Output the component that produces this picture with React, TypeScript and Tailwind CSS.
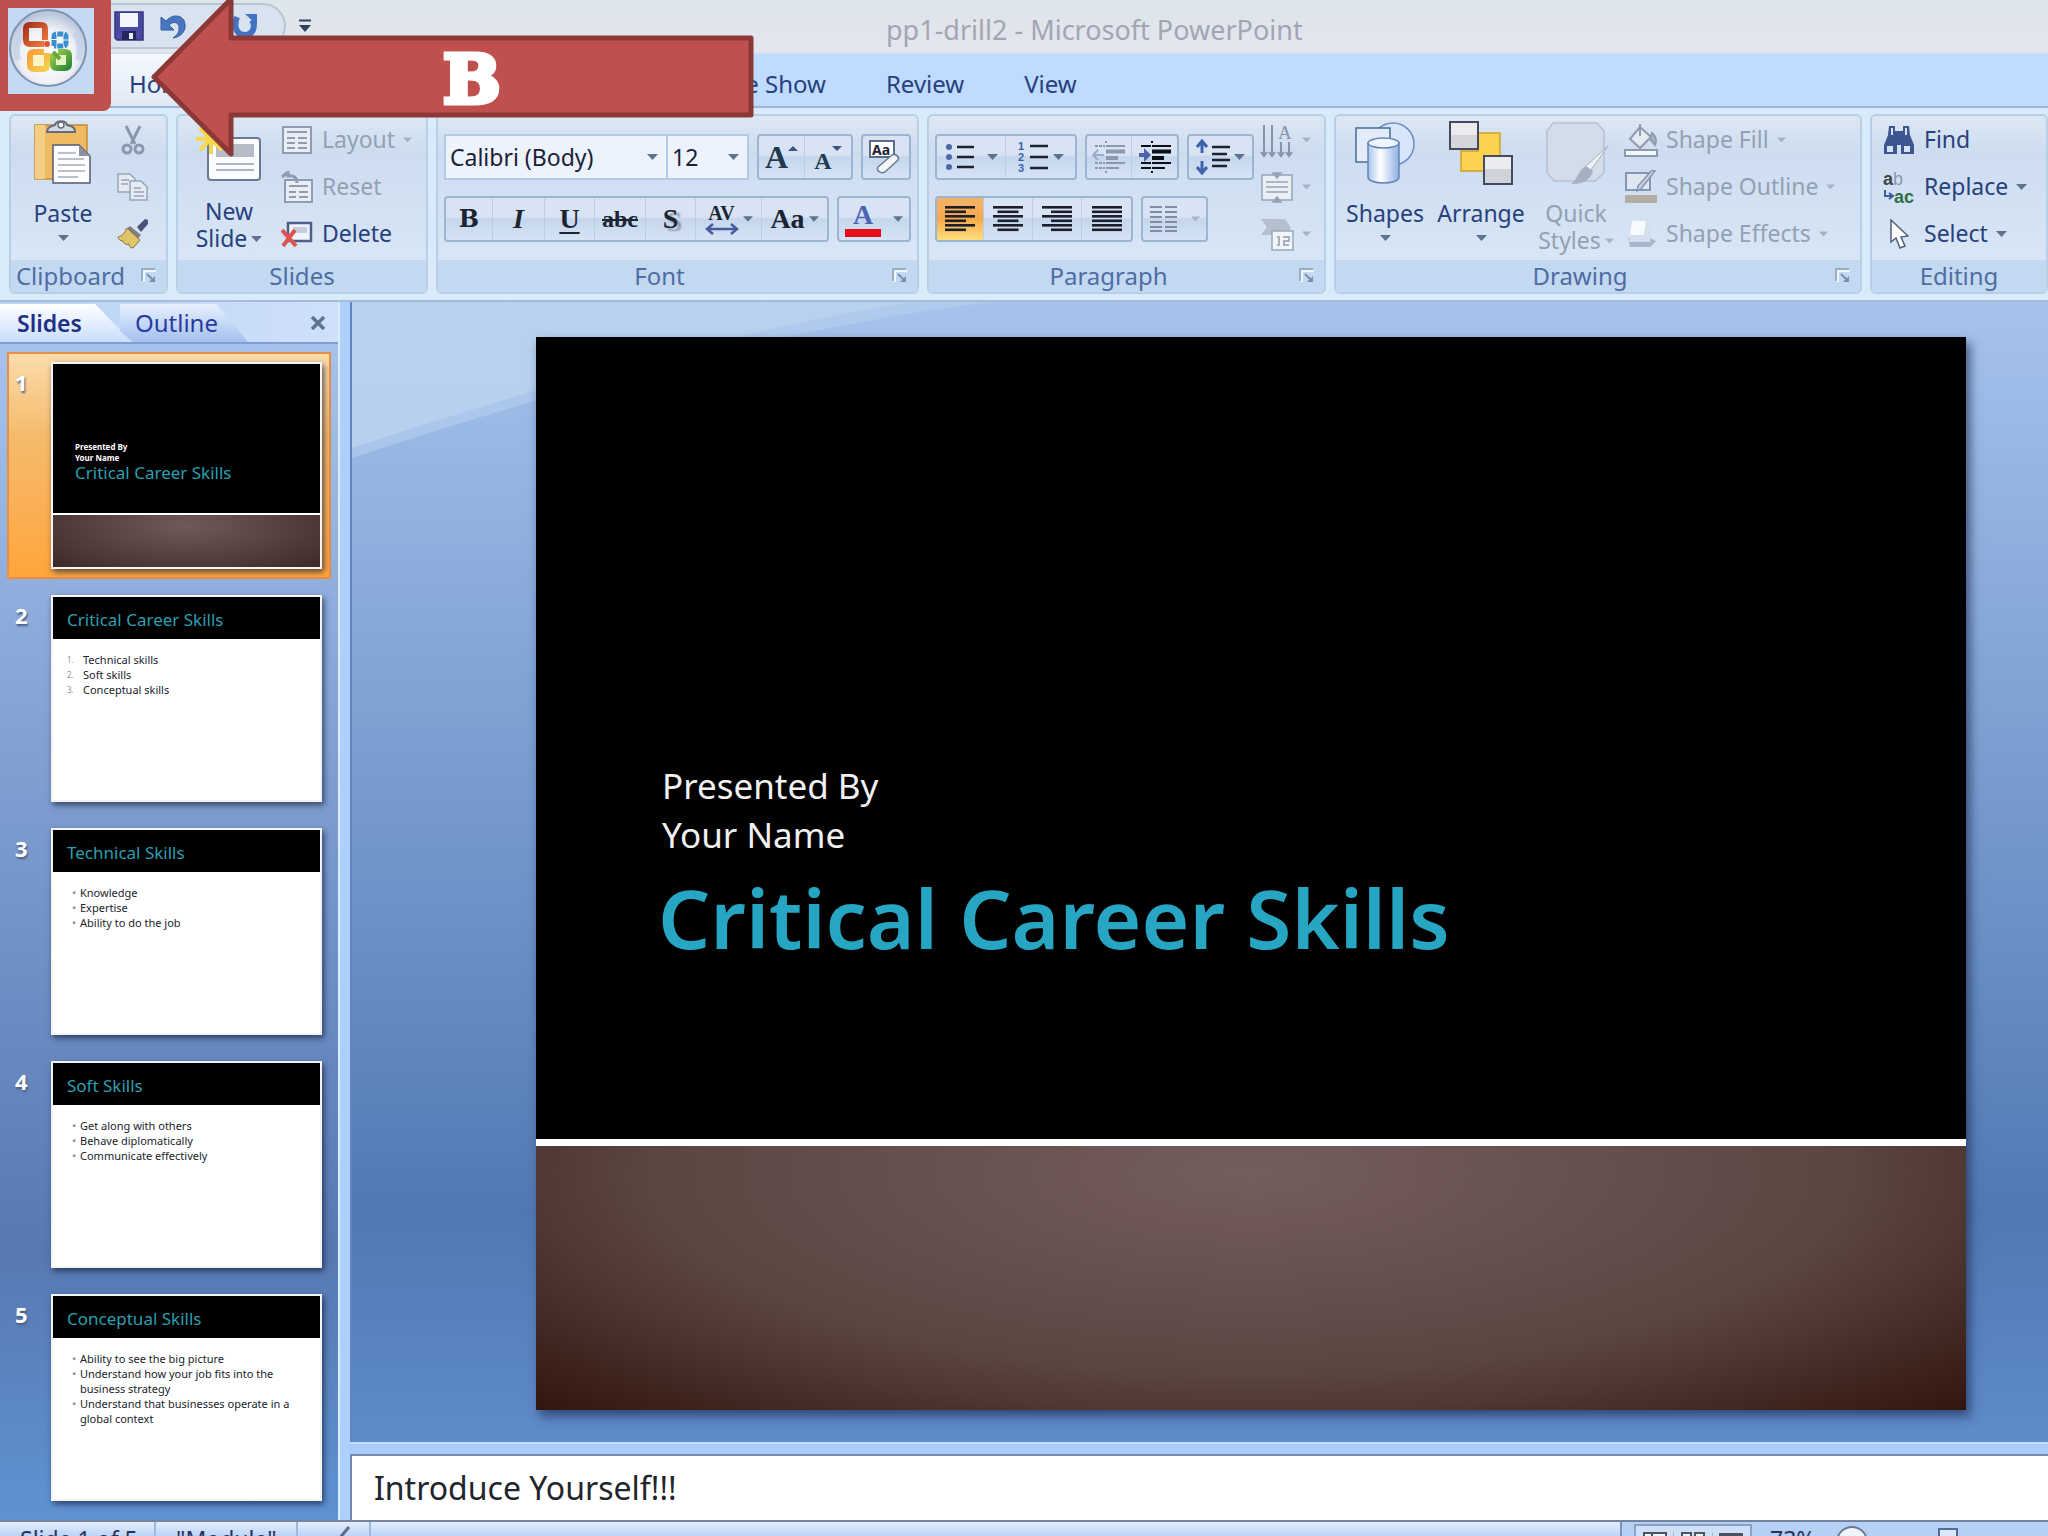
import type { ReactNode } from 'react';

const slides = [
  { title: 'Critical Career Skills', numbered: true, points: ['Technical skills', 'Soft skills', 'Conceptual skills'] },
  { title: 'Technical Skills', points: ['Knowledge', 'Expertise', 'Ability to do the job'] },
  { title: 'Soft Skills', points: ['Get along with others', 'Behave diplomatically', 'Communicate effectively'] },
  {
    title: 'Conceptual Skills',
    points: [
      'Ability to see the big picture',
      'Understand how your job fits into the business strategy',
      'Understand that businesses operate in a global context'
    ]
  }
];

function Caret({ className = 'text-[#5f7390]' }: { className?: string }) {
  return (
    <svg width="11" height="6" viewBox="0 0 11 6" className={`shrink-0 ${className}`} aria-hidden="true">
      <path d="M0 0h11L5.500 6z" fill="currentColor" />
    </svg>
  );
}

function Launcher({ label }: { label: string }) {
  return (
    <button aria-label={label} className="mr-2">
      <svg width="18" height="18" viewBox="0 0 18 18" fill="none">
        <path d="M2 14V2h13" stroke="#8b9fbe" strokeWidth="1.500" />
        <path d="M4 15V4h12" stroke="#fff" strokeWidth="1.500" />
        <path d="M7 7l6 6" stroke="#7a8fb0" strokeWidth="2" />
        <path d="M15 9v6H9z" fill="#7a8fb0" />
      </svg>
    </button>
  );
}

function Group({ name, width, launcher, children }: { name: string; width: string; launcher?: boolean; children: ReactNode }) {
  return (
    <section
      aria-label={name}
      className={`flex shrink-0 flex-col overflow-hidden rounded-md border-2 border-[#b9cfe6] bg-linear-to-b from-[#dde8f4] via-[#cddcef] via-20% to-[#dbe9f9] ${width}`}
    >
      <div className="flex h-[144px] text-[#27417c]">{children}</div>
      <div className="flex h-8 items-center bg-[#c2d9f1] text-2xl text-[#4f6da3]">
        <span className={`flex-1 text-center leading-8 ${launcher ? 'pr-2.5' : ''}`}>{name}</span>
        {launcher && <Launcher label={`${name} options`} />}
      </div>
    </section>
  );
}

function ButtonBox({ children, className = '' }: { children: ReactNode; className?: string }) {
  return (
    <div className={`flex h-[46px] items-stretch overflow-hidden rounded-sm border-2 border-[#9db4d3] bg-linear-to-b from-[#d8e4f3] from-45% via-[#c5d6ec] via-50% to-[#d5e3f5] ${className}`}>
      {children}
    </div>
  );
}

function Tool({ label, width, className = '', children }: { label: string; width: string; className?: string; children: ReactNode }) {
  return (
    <button aria-label={label} className={`flex items-center justify-center gap-1 border-r border-[#bccde4] last:border-r-0 ${width} ${className}`}>
      {children}
    </button>
  );
}

function SmallRow({ icon, label, caret, muted }: { icon: ReactNode; label: string; caret?: boolean; muted?: boolean }) {
  return (
    <button className={`flex h-[47px] items-center gap-2 whitespace-nowrap ${muted ? 'text-[#94a0b3]' : ''}`}>
      <span className="flex w-[34px] justify-center">{icon}</span>
      {label}
      {caret && <Caret className={muted ? 'w-[9px] text-[#a5b3c8]' : 'text-[#5f7390]'} />}
    </button>
  );
}

function OfficeLogo() {
  return (
    <svg width="86" height="86" viewBox="0 0 86 86" aria-hidden="true">
      <defs>
        <radialGradient id="orb" cx="50%" cy="60%" r="55%">
          <stop offset="0" stopColor="#ffffff" />
          <stop offset="0.65" stopColor="#f0f1f5" />
          <stop offset="1" stopColor="#b9c7dd" />
        </radialGradient>
        <linearGradient id="logoRed" x1="0" y1="0" x2="1" y2="1">
          <stop offset="0" stopColor="#a8321a" />
          <stop offset="1" stopColor="#ee7a3c" />
        </linearGradient>
        <linearGradient id="logoYellow" x1="0" y1="0" x2="1" y2="1">
          <stop offset="0" stopColor="#f7a13a" />
          <stop offset="1" stopColor="#f8cf4e" />
        </linearGradient>
        <linearGradient id="logoGreen" x1="0" y1="0" x2="1" y2="1">
          <stop offset="0" stopColor="#9ecb4a" />
          <stop offset="1" stopColor="#2c8a35" />
        </linearGradient>
      </defs>
      <path d="M0 0h86v86H0z" fill="#c6d9f3" />
      <circle cx="40" cy="40" r="38" fill="url(#orb)" stroke="#7f93b0" strokeWidth="2" />
      <path d="M10 52a32 32 0 0 1 4-26M70 52a32 32 0 0 0-3-27" fill="none" stroke="#bccbe6" strokeWidth="6" opacity=".6" />
      <path d="M36 36H22c-3 0-4-1-4-4V21c0-3 1-4 4-4h11c3 0 4 1 4 4v11" fill="none" stroke="url(#logoRed)" strokeWidth="6" />
      <path d="M46 38V29c0-2 1-3 3-3h6c2 0 3 1 3 3v6c0 2-1 3-3 3h-9" fill="none" stroke="#3a8fd0" strokeWidth="5" strokeDasharray="6 1" />
      <path d="M39 45v12c0 3-1 4-4 4H26c-3 0-4-1-4-4V48c0-3 1-4 4-4h10" fill="#fff4c8" stroke="url(#logoYellow)" strokeWidth="6" />
      <path d="M45 46v10c0 3 1 4 4 4h8c3 0 4-1 4-4v-8c0-3-1-4-4-4h-7" fill="#e4f3c4" stroke="url(#logoGreen)" strokeWidth="6" />
      <path d="M45 44l7 7" stroke="#69a93c" strokeWidth="4" />
      <circle cx="39" cy="36" r="3" fill="#e2552a" />
    </svg>
  );
}

function AlignIcon({ kind }: { kind: 'left' | 'center' | 'right' | 'full' }) {
  return (
    <svg width="30" height="26" viewBox="0 0 30 26" aria-hidden="true">
      {[0, 1, 2, 3, 4, 5].map((row) => {
        const w = kind === 'full' || row % 2 === 0 ? 30 : 21;
        const x = kind === 'right' ? 30 - w : kind === 'center' ? (30 - w) / 2 : 0;
        return <rect key={row} x={x} y={row * 4.5} width={w} height="2.6" fill="#1b1f2b" />;
      })}
    </svg>
  );
}

function IndentIcon({ muted }: { muted?: boolean }) {
  const ink = muted ? '#8b98ae' : '#0d0f16';
  return (
    <svg width="34" height="34" viewBox="0 0 34 34" aria-hidden="true">
      <path d="M3 6h10M3 23h10M3 28h10" stroke={ink} strokeWidth="2" strokeDasharray={muted ? '3 1' : undefined} />
      <path d="M14 6h19M14 23h19M14 28h13" stroke={ink} strokeWidth="2" />
      <path d="M14 11.5h19M14 18h12" stroke={ink} strokeWidth="4" />
      <path d="M14 1v2M14 31v2" stroke={ink} strokeWidth="2" />
      {muted ? (
        <path d="M1 15h11M6 10l-5 5 5 5" stroke="#98a9c9" strokeWidth="2" fill="none" />
      ) : (
        <path d="M1 13h5V8l7 7-7 7v-5H1z" fill="#5163a8" />
      )}
    </svg>
  );
}

function PasteIcon() {
  return (
    <svg width="60" height="66" viewBox="0 0 60 66" aria-hidden="true">
      <path d="M2 5h52v54H2z" fill="#efbb62" stroke="#c58b35" strokeWidth="1.5" />
      <path d="M2 5h10v54H2z" fill="#f5cd84" />
      <path d="M14 12c0-6 6-6 8-7 1-5 11-5 12 0 3 1 8 1 8 7z" fill="#d5dae2" stroke="#666d7b" strokeWidth="2" />
      <circle cx="28" cy="5" r="3" fill="#fff" stroke="#666d7b" strokeWidth="1.5" />
      <path d="M20 25h26l11 11v27H20z" fill="#fdfdff" stroke="#535b70" strokeWidth="1.5" />
      <path d="M46 25v11h11z" fill="#8a92a3" />
      <path d="M25 33h18M25 39h26M25 45h27M25 51h27M25 57h20" stroke="#a3abbb" strokeWidth="1.5" />
    </svg>
  );
}

function Arrow() {
  return (
    <svg width="606" height="162" viewBox="0 0 606 162" className="absolute top-0 left-[150px]" aria-hidden="true">
      <path d="M4 77L81 -1V38H601V115H81V154z" fill="#c0504d" stroke="#8c3836" strokeWidth="5" strokeLinejoin="round" />
    </svg>
  );
}

function TitleBar() {
  return (
    <header className="flex h-[54px] shrink-0 items-center border-b-2 border-[#d4e2f4] bg-linear-to-b from-[#dce5ea] to-[#e5e6ed] pl-[110px]">
      <div className="flex h-[46px] w-[176px] items-center rounded-r-3xl border-2 border-l-0 border-[#b9c6d8] bg-[#d9e3f0]">
        <button aria-label="Save" className="ml-1">
          <svg width="30" height="30" viewBox="0 0 30 30">
            <path d="M1 1h28v28H3l-2-2z" fill="#4a4aa3" stroke="#33337c" strokeWidth="1.5" />
            <path d="M6 2h18v14H6z" fill="#f4f6ff" />
            <path d="M8 20h14v9H8z" fill="#26265c" />
            <path d="M15 22h4v6h-4z" fill="#e8ebfa" />
          </svg>
        </button>
        <button aria-label="Undo" className="ml-4">
          <svg width="28" height="28" viewBox="0 0 28 28">
            <path d="M1 5v13h13L9 13c5-5 11-2 10 4 0 4-3 7-6 9 8-1 13-7 12-14C24 3 13 1 6 9z" fill="#4876c0" stroke="#345d9f" />
          </svg>
        </button>
        <button aria-label="Repeat" className="ml-11">
          <svg width="26" height="26" viewBox="0 0 26 26">
            <path d="M5 4c-4 10 0 18 8 18s11-9 7-15" fill="none" stroke="#4272c4" strokeWidth="6" />
            <path d="M13 1h12v11z" fill="#4272c4" />
          </svg>
        </button>
      </div>
      <button aria-label="Customize Quick Access Toolbar" className="ml-3">
        <svg width="14" height="14" viewBox="0 0 14 14">
          <path d="M1 1.500h12" stroke="#33405c" strokeWidth="2" />
          <path d="M1 6h12l-6 7z" fill="#33405c" />
        </svg>
      </button>
      <h1 className="ml-[574px] pt-2 text-[27px] whitespace-nowrap text-[#a3a5b3]">pp1-drill2 - Microsoft PowerPoint</h1>
    </header>
  );
}

function Tabs() {
  const tabs = ['Insert', 'Design', 'Animations', 'Slide Show', 'Review', 'View'];
  return (
    <nav className="flex h-[54px] shrink-0 items-stretch border-b-2 border-[#9db5dc] bg-[#bfdbff] pl-[100px] text-2xl text-[#27417c]">
      <button className="w-[122px] rounded-t-md bg-linear-to-b from-[#f5f9ff] to-[#dfe9f5] pt-2 pl-[29px] text-left">Home</button>
      {tabs.map((tab) => (
        <button key={tab} className="px-[30px] pt-2">{tab}</button>
      ))}
    </nav>
  );
}

function Ribbon() {
  return (
    <div className="flex h-[194px] shrink-0 gap-2 overflow-hidden border-b-2 border-[#a5bbd6] bg-[#d9eafa] pt-1.5 pb-1.5 pl-[9px]">
      <Group name="Clipboard" width="w-[159px]" launcher>
        <button className="flex w-[104px] flex-col items-center pt-1 leading-[27px]">
          <PasteIcon />
          <span className="mt-3.5">Paste</span>
          <Caret className="mt-2 text-[#5f7390]" />
        </button>
        <div className="flex flex-col">
          <button aria-label="Cut" className="flex h-[47px] w-9 items-center justify-center">
            <svg width="24" height="30" viewBox="0 0 24 30" fill="none" stroke="#8b97ac" strokeWidth="3">
              <path d="M5 1l9 18M19 1l-9 18" />
              <circle cx="6" cy="24" r="4" />
              <circle cx="18" cy="24" r="4" />
            </svg>
          </button>
          <button aria-label="Copy" className="flex h-[47px] w-9 items-center justify-center">
            <svg width="32" height="28" viewBox="0 0 32 28" fill="#e6ebf3" stroke="#97a4b9" strokeWidth="1.5">
              <path d="M1 1h12l5 5v13H1z" />
              <path d="M13 8h11l6 6v13H13z" />
              <path d="M4 7h8M4 11h7M17 15h7M17 19h10M17 23h10" />
            </svg>
          </button>
          <button aria-label="Format Painter" className="flex h-[47px] w-9 items-center justify-center">
            <svg width="32" height="30" viewBox="0 0 32 30">
              <path d="M31 1l-3-1-8 8 4 5 7-8z" fill="#4b5276" />
              <path d="M13 7l11 9-4 5-12-10z" fill="#7d7f88" />
              <path d="M10 9l13 12-7 8c-3 0-4-2-4-4-3 1-5 0-6-3-3 0-5-2-5-4 4-1 7-4 9-9z" fill="#e0c46b" stroke="#8b7532" />
            </svg>
          </button>
        </div>
      </Group>

      <Group name="Slides" width="w-[252px]">
        <button className="flex w-[102px] flex-col items-center pt-2 leading-[27px]">
          <svg width="70" height="60" viewBox="0 0 70 60" aria-hidden="true">
            <rect x="14" y="14" width="52" height="42" rx="3" fill="#fbfcff" stroke="#6b7a93" strokeWidth="2" />
            <path d="M22 20h38v13H22z" fill="#b5bcc8" />
            <path d="M22 40h38M22 46h38" stroke="#aeb6c4" strokeWidth="2" />
            <path d="M17 0v30M2 15h30M6 4l22 22M28 4L6 26" stroke="#f5d64c" strokeWidth="4" />
          </svg>
          <span className="mt-3.5">New</span>
          <span className="flex items-center gap-1">Slide <Caret /></span>
        </button>
        <div className="flex flex-col">
          <SmallRow muted caret label="Layout" icon={
            <svg width="30" height="28" viewBox="0 0 30 28" fill="none" stroke="#8f9cb1" strokeWidth="2">
              <rect x="1" y="1" width="28" height="26" fill="#e9eef5" />
              <path d="M5 6h20M5 12h8M5 17h8M5 22h8M16 12h9M16 17h9M16 22h9" />
            </svg>
          } />
          <SmallRow muted label="Reset" icon={
            <svg width="32" height="32" viewBox="0 0 32 32" fill="none" stroke="#8f9cb1" strokeWidth="2">
              <rect x="4" y="9" width="27" height="22" fill="#e9eef5" />
              <path d="M8 15h19M8 21h7M8 26h7M18 21h9M18 26h9" />
              <path d="M1 6l6-5v4c6-1 9 2 9 7" strokeWidth="3" />
            </svg>
          } />
          <SmallRow label="Delete" icon={
            <svg width="32" height="28" viewBox="0 0 32 28" fill="none">
              <rect x="7" y="3" width="23" height="18" fill="#eef3fc" stroke="#4d5f88" strokeWidth="2.5" />
              <path d="M12 7h14v6H12z" fill="#c4cede" />
              <path d="M1 10l14 16M14 10L2 26" stroke="#e0524f" strokeWidth="4" />
            </svg>
          } />
        </div>
      </Group>

      <Group name="Font" width="w-[483px]" launcher>
        <div className="flex flex-col gap-4 pt-[18px] pl-1.5">
          <div className="flex gap-2">
            <div className="flex h-[46px] border-2 border-[#b3c9e6] bg-[#edf3fc] text-[#1b2236]">
              <label className="flex items-center border-r-2 border-[#b3c9e6] pr-2">
                <select aria-label="Font" className="w-[201px] appearance-none pl-1 outline-none" defaultValue="Calibri (Body)">
                  <option>Calibri (Body)</option>
                </select>
                <Caret />
              </label>
              <label className="flex items-center pr-2">
                <select aria-label="Font Size" className="w-[60px] appearance-none pl-1 outline-none" defaultValue="12">
                  <option>12</option>
                </select>
                <Caret />
              </label>
            </div>
            <ButtonBox className="font-['Liberation_Serif',serif] font-bold text-[#1f3a4d]">
              <Tool label="Grow Font" width="w-[46px]">
                <span className="text-[32px]">A</span>
                <svg width="10" height="24" viewBox="0 0 10 24" className="-ml-1"><path d="M0 6l5-5 5 5z" fill="#3d5480" /></svg>
              </Tool>
              <Tool label="Shrink Font" width="w-[46px]">
                <span className="pt-2 text-2xl">A</span>
                <svg width="10" height="24" viewBox="0 0 10 24" className="-ml-1"><path d="M0 1h10L5 6z" fill="#3d5480" /></svg>
              </Tool>
            </ButtonBox>
            <ButtonBox>
              <Tool label="Clear Formatting" width="w-[46px]">
                <svg width="36" height="36" viewBox="0 0 36 36">
                  <path d="M2 2h24v16H2z" fill="#fff" stroke="#5d6c88" strokeWidth="2" />
                  <text x="4" y="16" fontSize="14" fontWeight="700" fill="#20242f">Aa</text>
                  <path d="M10 28l14-12c3-2 8 2 6 5L17 33c-4 2-9-1-7-5z" fill="#f4f6fa" stroke="#6b7891" strokeWidth="1.5" />
                </svg>
              </Tool>
            </ButtonBox>
          </div>
          <div className="flex gap-2">
            <ButtonBox className="font-['Liberation_Serif',serif] text-[28px] text-[#1c2434]">
              <Tool label="Bold" width="w-[47px]"><b className="font-['DejaVu_Serif',serif] text-2xl">B</b></Tool>
              <Tool label="Italic" width="w-[52px]"><i className="font-bold">I</i></Tool>
              <Tool label="Underline" width="w-[50px]"><u className="font-bold underline-offset-4">U</u></Tool>
              <Tool label="Strikethrough" width="w-[51px]"><s className="text-2xl font-bold">abc</s></Tool>
              <Tool label="Text Shadow" width="w-[50px]"><b className="[text-shadow:4px_3px_2px_#8a95ac]">S</b></Tool>
              <Tool label="Character Spacing" width="w-[66px]">
                <span className="flex flex-col items-center text-xl leading-5 font-bold">
                  AV
                  <svg width="34" height="12" viewBox="0 0 34 12"><path d="M2 6h30M8 1L2 6l6 5M26 1l6 5-6 5" fill="none" stroke="#465c9c" strokeWidth="2.500" /></svg>
                </span>
                <Caret className="w-[10px] text-[#5f7390]" />
              </Tool>
              <Tool label="Change Case" width="w-[65px]">
                <span className="font-bold">Aa</span>
                <Caret className="w-[10px] text-[#5f7390]" />
              </Tool>
            </ButtonBox>
            <ButtonBox>
              <Tool label="Font Color" width="w-[70px]" className="font-['Liberation_Serif',serif] text-[#4a63b4]">
                <span className="flex w-9 flex-col items-center text-[28px] leading-7 font-bold">
                  A
                  <span className="h-2 w-9 bg-[#e60f18]"></span>
                </span>
                <span className="w-1"></span>
                <Caret className="w-[10px] text-[#5f7390]" />
              </Tool>
            </ButtonBox>
          </div>
        </div>
      </Group>

      <Group name="Paragraph" width="w-[399px]" launcher>
        <div className="flex w-[331px] shrink-0 flex-col gap-4 pt-[18px] pl-1.5">
          <div className="flex gap-2">
            <ButtonBox>
              <Tool label="Bullets" width="w-[69px]">
                <svg width="30" height="30" viewBox="0 0 30 30">
                  <path d="M12 5h17M12 15h17M12 25h17" stroke="#1d2231" strokeWidth="2.500" />
                  <circle cx="4" cy="5" r="3" fill="#4d66a5" />
                  <circle cx="4" cy="15" r="3" fill="#4d66a5" />
                  <circle cx="4" cy="25" r="3" fill="#4d66a5" />
                </svg>
                <span className="w-1"></span>
                <Caret />
              </Tool>
              <Tool label="Numbering" width="w-[69px]">
                <svg width="32" height="36" viewBox="0 0 32 36">
                  <path d="M13 7h18M13 18h18M13 29h18" stroke="#1d2231" strokeWidth="2.500" />
                  <g fontSize="11" fontWeight="700" fill="#4060a8" className="font-['Liberation_Sans',sans-serif]">
                    <text x="1" y="11">1</text>
                    <text x="1" y="22">2</text>
                    <text x="1" y="33">3</text>
                  </g>
                </svg>
                <Caret />
              </Tool>
            </ButtonBox>
            <ButtonBox>
              <Tool label="Decrease Indent" width="w-[45px]"><IndentIcon muted /></Tool>
              <Tool label="Increase Indent" width="w-[45px]"><IndentIcon /></Tool>
            </ButtonBox>
            <ButtonBox>
              <Tool label="Line Spacing" width="w-[63px]">
                <svg width="34" height="36" viewBox="0 0 34 36">
                  <path d="M6 2v12M6 22v12M1 8l5-6 5 6M1 28l5 6 5-6" stroke="#3d63ad" strokeWidth="3" fill="none" />
                  <path d="M16 8h18M16 15h15M16 21h18M16 27h15" stroke="#1d2231" strokeWidth="2.500" />
                </svg>
                <Caret />
              </Tool>
            </ButtonBox>
          </div>
          <div className="flex gap-2">
            <ButtonBox>
              <Tool label="Align Left" width="w-[47px]" className="bg-linear-to-b from-[#f3b268] via-[#f7a94a] to-[#fddf7c]"><AlignIcon kind="left" /></Tool>
              <Tool label="Center" width="w-[49px]"><AlignIcon kind="center" /></Tool>
              <Tool label="Align Right" width="w-[49px]"><AlignIcon kind="right" /></Tool>
              <Tool label="Justify" width="w-[49px]"><AlignIcon kind="full" /></Tool>
            </ButtonBox>
            <ButtonBox>
              <Tool label="Columns" width="w-[63px]">
                <svg width="30" height="28" viewBox="0 0 30 28">
                  <path d="M1 2h12M1 7h12M1 12h12M1 17h12M1 22h12M1 26h12M16 2h12M16 7h12M16 12h12M16 17h12M16 22h12M16 26h12" stroke="#7f8da6" strokeWidth="2" />
                </svg>
                <span className="w-1"></span>
                <Caret className="w-[9px] text-[#a5b3c8]" />
              </Tool>
            </ButtonBox>
          </div>
        </div>
        <div className="flex flex-col">
          <button aria-label="Text Direction" className="flex h-[47px] items-center gap-2">
            <svg width="34" height="38" viewBox="0 0 34 38" fill="none" stroke="#8793a9" strokeWidth="2">
              <path d="M4 4v31M1 31l3 4 3-4M12 4v31M9 31l3 4 3-4M21 21v14M18 31l3 4 3-4M29 21v14M26 31l3 4 3-4" />
              <text x="18" y="18" fontSize="19" fill="#8793a9" stroke="none" className="font-['Liberation_Serif',serif]">A</text>
            </svg>
            <Caret className="w-[9px] text-[#a5b3c8]" />
          </button>
          <button aria-label="Align Text" className="flex h-[47px] items-center gap-2">
            <svg width="34" height="34" viewBox="0 0 34 34" stroke="#97a3b6" strokeWidth="1.500">
              <path d="M2 5h30v25H2z" fill="#eaeff6" />
              <path d="M6 12h22M6 17h22M6 22h22" />
              <path d="M13 3h8l-4 5zM13 32h8l-4-5z" fill="#97a3b6" />
            </svg>
            <Caret className="w-[9px] text-[#a5b3c8]" />
          </button>
          <button aria-label="Convert to SmartArt" className="flex h-[47px] items-center gap-2">
            <svg width="34" height="34" viewBox="0 0 34 34">
              <path d="M1 2h24l6 9-6 7H1l6-8z" fill="#b5bfcd" />
              <rect x="12" y="14" width="21" height="19" fill="#f1f4f8" stroke="#9aa6b8" strokeWidth="1.500" />
              <path d="M17 20h2v8h-2M23 20h6v4h-5v4h5" fill="none" stroke="#a7b1c1" strokeWidth="2" />
            </svg>
            <Caret className="w-[9px] text-[#a5b3c8]" />
          </button>
        </div>
      </Group>

      <Group name="Drawing" width="w-[528px]" launcher>
        <button className="flex w-[98px] flex-col items-center pt-1 leading-[27px]">
          <svg width="64" height="66" viewBox="0 0 64 66" aria-hidden="true">
            <defs>
              <linearGradient id="cyl">
                <stop offset="0" stopColor="#a9c5ee" />
                <stop offset="0.4" stopColor="#ffffff" />
                <stop offset="1" stopColor="#8fb0e0" />
              </linearGradient>
            </defs>
            <circle cx="40" cy="24" r="21" fill="#d7e6fa" stroke="#6b8cc4" strokeWidth="1.500" />
            <rect x="3" y="8" width="34" height="34" fill="#e3edfa" stroke="#4c6a98" strokeWidth="1.500" />
            <path d="M15 23v34c0 8 31 8 31 0V23z" fill="url(#cyl)" stroke="#6384b8" strokeWidth="1.500" />
            <ellipse cx="30.500" cy="23" rx="15.500" ry="5" fill="#eef5ff" stroke="#6384b8" strokeWidth="1.500" />
          </svg>
          <span className="mt-3.5">Shapes</span>
          <Caret className="mt-2 text-[#5f7390]" />
        </button>
        <button className="flex w-[94px] flex-col items-center pt-1 leading-[27px]">
          <svg width="66" height="66" viewBox="0 0 66 66" aria-hidden="true">
            <path d="M30 13h22v23H39v15H13V31h17z" fill="#fbd34f" stroke="#cfa02e" strokeWidth="1.500" />
            <rect x="2" y="2" width="28" height="27" fill="#d4d6dc" stroke="#434b5e" strokeWidth="2" />
            <rect x="36" y="36" width="28" height="28" fill="#cfd2d9" stroke="#434b5e" strokeWidth="2" />
            <path d="M3 3h26v12H3zM37 37h26v12H37z" fill="#ececf0" />
          </svg>
          <span className="mt-3.5">Arrange</span>
          <Caret className="mt-2 text-[#5f7390]" />
        </button>
        <button className="flex w-[96px] flex-col items-center pt-1 leading-[27px] text-[#94a0b3]">
          <svg width="66" height="66" viewBox="0 0 66 66" aria-hidden="true">
            <path d="M10 3h44l7 8v42l-9 8H11l-7-8V11z" fill="#d3dce9" stroke="#b4c1d3" strokeWidth="1.500" />
            <path d="M65 26L48 50l-6-3z" fill="#eef2f8" stroke="#a5b1c3" />
            <path d="M43 46l7 5c-2 8-10 14-22 13 6-3 7-14 15-18z" fill="#a6b0c0" />
          </svg>
          <span className="mt-3.5">Quick</span>
          <span className="flex items-center gap-1">Styles <Caret className="w-[9px] text-[#a5b3c8]" /></span>
        </button>
        <div className="flex flex-col">
          <SmallRow muted caret label="Shape Fill" icon={
            <svg width="34" height="34" viewBox="0 0 34 34" fill="none" stroke="#8e9ab0" strokeWidth="2">
              <path d="M16 4L6 16l10 9 11-11zM16 1v12" fill="#e6ebf3" />
              <path d="M28 10c4 3 5 8 3 12l-5-6z" fill="#a5afc0" />
              <rect x="1" y="27" width="32" height="6" fill="#f5f8fb" />
            </svg>
          } />
          <SmallRow muted caret label="Shape Outline" icon={
            <svg width="34" height="34" viewBox="0 0 34 34" fill="none">
              <path d="M2 3h24v17H2z" fill="#dfe7f3" stroke="#8595b2" strokeWidth="2" />
              <path d="M31 1L17 19l-4 2 1-5L28 0z" fill="#c6d0e0" stroke="#8595b2" strokeWidth="1.500" />
              <path d="M1 25h32v8H1z" fill="#b4ada3" />
            </svg>
          } />
          <SmallRow muted caret label="Shape Effects" icon={
            <svg width="32" height="30" viewBox="0 0 32 30">
              <path d="M3 19h22l6 3-6 6H5z" fill="#a9b6cc" />
              <path d="M7 2h16l4 5-2 16H4l1-14z" fill="#d4deec" />
              <path d="M7 2h14l-2 14H5z" fill="#f6f9fd" />
            </svg>
          } />
        </div>
      </Group>

      <Group name="Editing" width="w-[178px]">
        <div className="flex flex-col pl-2.5">
          <SmallRow label="Find" icon={
            <svg width="32" height="30" viewBox="0 0 32 30">
              <path d="M6 1h6v5h8V1h6l1 9 4 10v9H18v-9h-4v9H1v-9l4-10z" fill="#3d5590" />
              <path d="M4 21h6v6H4zM21 21h6v6h-6zM8 3h2v7H8zM22 3h2v7h-2z" fill="#d5e1f7" />
            </svg>
          } />
          <SmallRow caret label="Replace" icon={
            <svg width="34" height="42" viewBox="0 0 34 42" className="font-['Liberation_Sans',sans-serif]">
              <text x="1" y="19" fontSize="18" fontWeight="700" fill="#3c4048">a<tspan fontWeight="400" fill="#8c97ab">b</tspan></text>
              <text x="12" y="37" fontSize="18" fontWeight="700" fill="#2f6e45">ac</text>
              <path d="M3 24v6h7M7 27l4 3-4 3" fill="none" stroke="#3b5aa0" strokeWidth="2" />
            </svg>
          } />
          <SmallRow caret label="Select" icon={
            <svg width="20" height="30" viewBox="0 0 20 30">
              <path d="M2 1v22l5-4 4 10 5-2-4-9 7-1z" fill="#fff" stroke="#515e7d" strokeWidth="1.500" />
            </svg>
          } />
        </div>
      </Group>
    </div>
  );
}

function Thumb({ number, active, children }: { number: number; active?: boolean; children: ReactNode }) {
  return (
    <li className={`mx-[7px] flex h-[227px] shrink-0 border-2 py-2 pr-[7px] ${active ? 'border-[#e98f43] bg-linear-to-b from-[#fbdcaa] via-[#f5bb6c] via-36% to-[#ffa53a]' : 'border-transparent'}`}>
      <span className="w-[42px] pt-1 pl-1.5 text-[22px] font-bold text-white [text-shadow:1px_2px_2px_#4c5e80]">{number}</span>
      <div className="flex flex-1 flex-col border-2 border-[#f4f4f4] bg-white shadow-[2px_3px_6px_rgba(20,30,60,.7)]">{children}</div>
    </li>
  );
}

function SlidePanel() {
  return (
    <aside className="flex w-[340px] shrink-0 flex-col overflow-hidden border-r-2 border-[#dcecff] bg-linear-to-b from-[#a9c6f0] via-[#5779b3] via-78% to-[#5f92d2]">
      <div className="flex h-[42px] shrink-0 items-stretch border-b-2 border-[#7f9fd4] bg-linear-to-r from-[#b9d2f4] to-[#cfe0fa] pt-0.5">
        <button className="w-[132px] bg-linear-to-b from-white to-[#c8defb] pl-[17px] text-left font-semibold text-[#1f2f85] [clip-path:polygon(0_0,72%_0,100%_100%,0_100%)]">
          Slides
        </button>
        <button className="-ml-3 w-[128px] bg-linear-to-b from-[#e8f1fd] to-[#a4c0ee] pl-[15px] text-left text-2xl text-[#2a3aa0] [clip-path:polygon(0_0,75%_0,100%_100%,10%_100%,0_70%)]">
          Outline
        </button>
        <button aria-label="Close" className="ml-auto pr-3">
          <svg width="16" height="14" viewBox="0 0 16 14"><path d="M2 1l12 12M14 1L2 13" stroke="#5c7494" strokeWidth="3.500" /></svg>
        </button>
      </div>
      <ol className="flex flex-col gap-1.5 pt-2">
        <Thumb number={1} active>
          <div className="flex flex-1 flex-col justify-end bg-black pb-[30px] pl-[22px]">
            <p className="text-[8px] leading-[11px] font-bold text-white">Presented By<br />Your Name</p>
            <p className="text-[17px] leading-5 text-[#2b9fb0]">Critical Career Skills</p>
          </div>
          <div className="h-[54px] border-t-2 border-white bg-radial-[at_50%_20%] from-[#6e5a58] to-[#3d2925]"></div>
        </Thumb>
        {slides.map((slide, index) => (
          <Thumb key={slide.title} number={index + 2}>
            <p className="flex h-[42px] items-center bg-black pt-1 pl-[14px] text-[17px] text-[#2b9fb0]">{slide.title}</p>
            <ul className={`pt-[13px] pr-6 text-[11px] leading-[15px] text-[#20232b] ${slide.numbered ? 'pl-[14px]' : 'pl-[19px]'}`}>
              {slide.points.map((point, i) => (
                <li key={point} className="flex">
                  <span className={`shrink-0 text-[#8a8f9a] ${slide.numbered ? 'w-4 text-[8px]' : 'w-2'}`}>{slide.numbered ? `${i + 1}.` : '•'}</span>
                  <span>{point}</span>
                </li>
              ))}
            </ul>
          </Thumb>
        ))}
      </ol>
    </aside>
  );
}

function Editor() {
  return (
    <main className="flex min-w-0 flex-1 flex-col">
      <div className="relative flex flex-1 border-l-2 border-[#5f87bd] bg-linear-to-b from-[#a6c3ec] via-[#5079b4] via-80% to-[#5f8bca] pt-[35px] pr-[82px] pb-8 pl-[184px]">
        <svg width="670" height="160" viewBox="0 0 670 160" className="absolute top-0 left-0" aria-hidden="true">
          <path d="M0 0h640C430 25 200 90 0 156z" fill="#b9d1f1" opacity=".55" />
          <path d="M0 0h560C400 25 200 80 0 146z" fill="#bdd3f0" opacity=".7" />
        </svg>
        <article className="relative flex flex-1 flex-col shadow-[4px_6px_10px_rgba(30,45,80,.7)]">
          <div className="flex flex-1 flex-col bg-black pt-[424px] pl-[122px]">
            <p className="pl-1 text-[35px] leading-[49px] text-[#f1f1f1]">Presented By<br />Your Name</p>
            <h2 className="text-[82px] leading-[116px] font-semibold whitespace-nowrap text-[#27a6c4]">Critical Career Skills</h2>
          </div>
          <div className="h-[271px] border-t-[7px] border-white bg-radial-[at_50%_10%] from-[#745d5d] via-[#5b4541] via-60% to-[#32150e]"></div>
        </article>
      </div>
      <div className="h-[14px] shrink-0 border-t-2 border-b-2 border-t-[#c0e2ff] border-b-[#7489ad] bg-[#aacbfb]"></div>
      <textarea
        aria-label="Notes"
        defaultValue="Introduce Yourself!!!"
        className="h-16 shrink-0 resize-none overflow-hidden border-l-2 border-[#7489ad] bg-white pt-3 pl-[22px] text-[32px] leading-10 text-[#22252c] outline-none"
      ></textarea>
    </main>
  );
}

function StatusBar() {
  return (
    <footer className="flex h-4 shrink-0 overflow-hidden border-t-2 border-[#76859f] bg-linear-to-b from-[#e3efff] to-[#bdd3f5] leading-[30px] text-[#27355e]">
      <span className="w-[156px] shrink-0 border-r-2 border-[#a3b9dc] pt-0.5 pl-5">Slide 1 of 5</span>
      <span className="w-[142px] shrink-0 border-r-2 border-[#a3b9dc] pt-0.5 pl-5">"Module"</span>
      <button aria-label="Spelling" className="flex w-[73px] shrink-0 border-r-2 border-[#a3b9dc] pt-1 pl-[26px]">
        <svg width="28" height="24" viewBox="0 0 28 24"><path d="M2 12l7 8L25 1" fill="none" stroke="#5c6b88" strokeWidth="3" /></svg>
      </button>
      <div className="ml-auto flex h-10 w-[428px] shrink-0 items-start border-l-2 border-[#7c93b9] bg-[#b5cff5] pt-0.5 pl-3">
        <div className="flex h-9 w-[118px] shrink-0 border-2 border-[#8aa2c6] bg-[#cfdff5] pt-1.5">
          <button aria-label="Normal" className="flex flex-1 justify-center border-r border-[#a3b9dc]">
            <svg width="24" height="20" viewBox="0 0 24 20"><path d="M1 1h22v18H1zM9 1v18" fill="#f0f4fa" stroke="#4b5566" strokeWidth="2" /></svg>
          </button>
          <button aria-label="Slide Sorter" className="flex flex-1 justify-center border-r border-[#a3b9dc]">
            <svg width="24" height="20" viewBox="0 0 24 20"><path d="M1 1h9v7H1zM14 1h9v7h-9zM1 12h9v7H1z" fill="#f0f4fa" stroke="#4b5566" strokeWidth="2" /></svg>
          </button>
          <button aria-label="Slide Show" className="flex flex-1 justify-center">
            <svg width="24" height="20" viewBox="0 0 24 20"><path d="M0 1h24v12H0z" fill="#4b5260" /></svg>
          </button>
        </div>
        <span className="ml-[18px] w-[48px] shrink-0">73%</span>
        <button aria-label="Zoom Out" className="mt-0.5 ml-[18px] size-8 shrink-0 rounded-full border-2 border-[#6b7891] bg-[#eff3fb]"></button>
        <input
          type="range"
          aria-label="Zoom"
          defaultValue={60}
          className="mx-2 mt-1 h-7 w-[124px] appearance-none bg-transparent [&::-webkit-slider-thumb]:h-7 [&::-webkit-slider-thumb]:w-5 [&::-webkit-slider-thumb]:appearance-none [&::-webkit-slider-thumb]:border-2 [&::-webkit-slider-thumb]:border-[#526b98] [&::-webkit-slider-thumb]:bg-[#d9e8fb]"
        />
      </div>
    </footer>
  );
}

export default function App() {
  return (
    <div className="relative flex h-screen flex-col overflow-hidden bg-[#aacbfb] font-['Noto_Sans',sans-serif] text-[23px]">
      <TitleBar />
      <Tabs />
      <Ribbon />
      <div className="flex min-h-0 flex-1">
        <SlidePanel />
        <div className="w-[10px] shrink-0 bg-[#aed0fd]"></div>
        <Editor />
      </div>
      <StatusBar />

      {/* Callout over the Office button */}
      <button aria-label="Office Button" className="absolute top-0 left-0 rounded-br-lg border-t-8 border-r-[17px] border-b-[17px] border-l-8 border-[#c0504d]">
        <OfficeLogo />
      </button>
      <Arrow />
      <span className="absolute top-[39px] left-[443px] font-['DejaVu_Serif',serif] text-[68px] leading-[80px] font-bold text-white [-webkit-text-stroke:5px_white]">B</span>
    </div>
  );
}
